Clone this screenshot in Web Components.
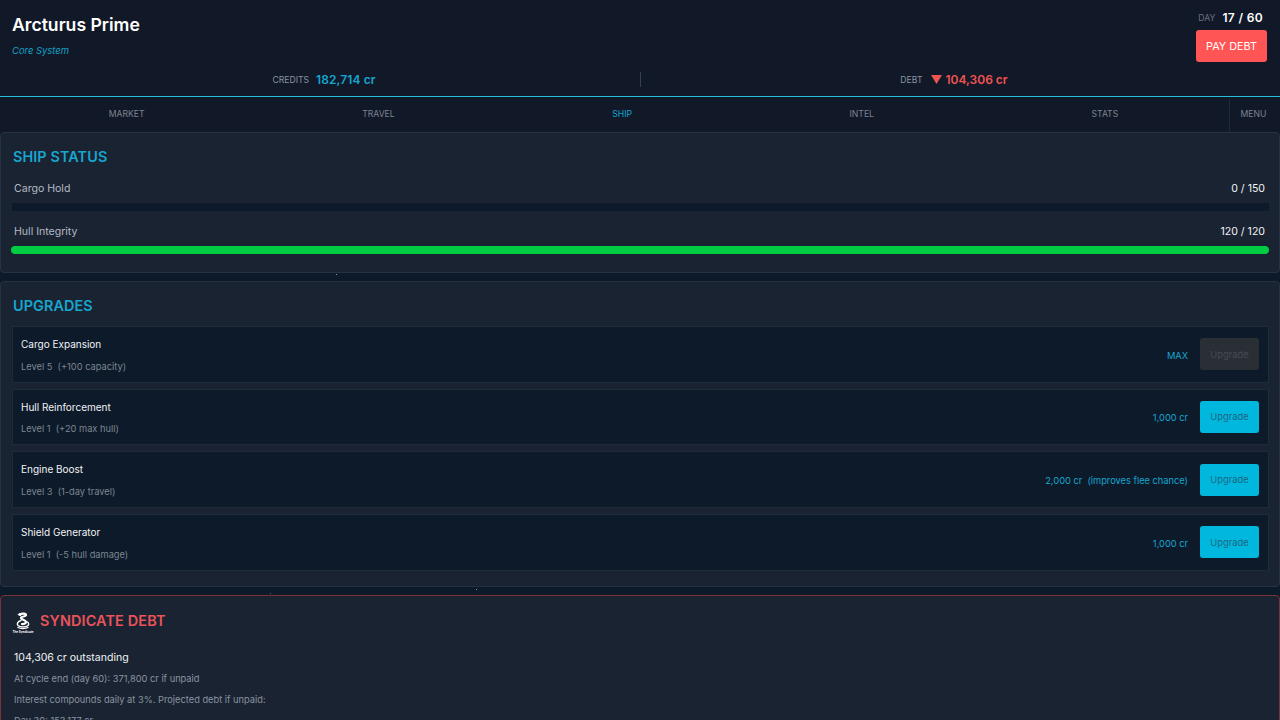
<!DOCTYPE html>
<html lang="en">
<head>
<meta charset="utf-8">
<title>Arcturus Prime</title>
<style>
html, body { margin: 0; height: 720px; overflow: hidden; background: #0d1a2a; }
body { font-family: Inter, "Liberation Sans", sans-serif; color: #fff; position: relative; }
.star { position: absolute; width: 1px; height: 1px; background: #8496a8; }
</style>
</head>
<body>
<game-header></game-header>
<game-nav></game-nav>
<span class="star" style="left:336px;top:274px"></span>
<span class="star" style="left:476px;top:589px"></span>
<span class="star" style="left:270px;top:593px;background:#46586a"></span>
<game-panel heading="SHIP STATUS" gap="15" style="height:141px">
  <stat-bar label="Cargo Hold" value="0 / 150" pct="0"></stat-bar>
  <stat-bar label="Hull Integrity" value="120 / 120" pct="100"></stat-bar>
</game-panel>
<game-panel heading="UPGRADES" gap="11" style="height:306px;margin-top:8px">
  <upgrade-row name="Cargo Expansion" info="Level 5&nbsp;&nbsp;(+100 capacity)" cost="MAX" disabled></upgrade-row>
  <upgrade-row name="Hull Reinforcement" info="Level 1&nbsp;&nbsp;(+20 max hull)" cost="1,000 cr"></upgrade-row>
  <upgrade-row name="Engine Boost" info="Level 3&nbsp;&nbsp;(1-day travel)" cost="2,000 cr&nbsp;&nbsp;(improves flee chance)"></upgrade-row>
  <upgrade-row name="Shield Generator" info="Level 1&nbsp;&nbsp;(-5 hull damage)" cost="1,000 cr"></upgrade-row>
</game-panel>
<debt-panel style="margin-top:8px"></debt-panel>

<script>
const header_template = document.createElement('template');
header_template.innerHTML = `
<style>
:host { display: block; height: 96px; background: #111827; border-bottom: 1px solid #26bddb; box-sizing: content-box; }
.top { display: flex; justify-content: space-between; height: 72px; padding: 0 13px 0 12px; }
h1 { margin: 0; padding-top: 14px; font-size: 17.6px; line-height: 22px; font-weight: 600; }
.sys { margin-top: 9px; font-size: 9.44px; line-height: 12px; font-style: italic; color: #14a3c7; }
.right { display: flex; flex-direction: column; align-items: flex-end; padding-top: 10px; }
.day { display: flex; align-items: center; gap: 7px; height: 15px; padding-right: 4px; font-size: 12px; font-weight: 600; letter-spacing: .35px; }
.day span { font-size: 8.64px; font-weight: 400; color: #6b7280; letter-spacing: 0; }
button { margin-top: 5px; width: 71px; height: 32px; padding: 0; border: 0; border-radius: 3px; background: #ff5555; color: #fff; font: 400 10.8px Inter, sans-serif; }
.stats { display: grid; grid-template-columns: 1fr 1fr; height: 24px; }
.stat { display: flex; justify-content: center; align-items: center; gap: 7px; height: 15px; font-size: 8.64px; color: #8a93a0; }
.stat.left { padding-left: 8px; }
.stat.rgt { border-left: 1px solid #374151; padding-right: 13px; }
.stat b { font-size: 12px; font-weight: 600; }
.credits { color: #17a6cf; letter-spacing: .1px; }
.debt { color: #ef5350; }
svg { display: block; margin: 0 -3px 0 1px; }
</style>
<div class="top">
  <div><h1>Arcturus Prime</h1><div class="sys">Core System</div></div>
  <div class="right">
    <div class="day"><span>DAY</span>17 / 60</div>
    <button>PAY DEBT</button>
  </div>
</div>
<div class="stats">
  <div class="stat left">CREDITS <b class="credits">182,714 cr</b></div>
  <div class="stat rgt">DEBT
    <svg width="11" height="9" viewBox="0 0 11 9"><path d="M0 0h11L5.500 9z" fill="#ef5350"/></svg>
    <b class="debt">104,306 cr</b></div>
</div>
`;
class GameHeader extends HTMLElement {
  constructor() {
    super();
    this.attachShadow({ mode: 'open' });
    this.shadowRoot.appendChild(header_template.content.cloneNode(true));
  }
}
customElements.define('game-header', GameHeader);

const nav_template = document.createElement('template');
nav_template.innerHTML = `
<style>
:host { display: flex; height: 35px; background: #111827; font-size: 8.64px; color: #7d8591; }
.tabs { flex: 1; display: flex; padding-right: 2px; }
.tabs span { flex: 1 1 auto; }
.tabs span, .menu { display: flex; align-items: center; justify-content: center; padding-bottom: 2px; }
.on { color: #17a6cf; }
.menu { width: 51px; box-sizing: border-box; padding-right: 3px; border-left: 1px solid #1f2937; margin: 2px 0 0; padding-bottom: 4px; }
</style>
<div class="tabs"><span>MARKET</span><span>TRAVEL</span><span class="on">SHIP</span><span>INTEL</span><span>STATS</span></div>
<div class="menu">MENU</div>
`;
class GameNav extends HTMLElement {
  constructor() {
    super();
    this.attachShadow({ mode: 'open' });
    this.shadowRoot.appendChild(nav_template.content.cloneNode(true));
  }
}
customElements.define('game-nav', GameNav);

const panel_template = document.createElement('template');
panel_template.innerHTML = `
<style>
:host { display: block; box-sizing: border-box; background: #1a2332; border: 1px solid #263242; border-radius: 4px; padding: 15px 10px 0 11px; }
h2 { margin: 0 0 14px 1px; font-size: 14.4px; line-height: 18px; font-weight: 600; letter-spacing: .1px; color: #17a6cf; }
</style>
<h2></h2>
<slot></slot>
`;
class GamePanel extends HTMLElement {
  constructor() {
    super();
    this.attachShadow({ mode: 'open' });
    this.shadowRoot.appendChild(panel_template.content.cloneNode(true));
    const h2 = this.shadowRoot.querySelector('h2');
    h2.textContent = this.getAttribute('heading');
    if (this.getAttribute('gap')) h2.style.marginBottom = this.getAttribute('gap') + 'px';
  }
}
customElements.define('game-panel', GamePanel);

const bar_template = document.createElement('template');
bar_template.innerHTML = `
<style>
:host { display: block; height: 43px; }
.row { display: flex; justify-content: space-between; box-sizing: border-box; padding: 1px 4px 0 2px; height: 22px; font-size: 10.56px; line-height: 14px; color: #b4bac4; }
.val { color: #f1f3f5; }
.track { height: 8px; background: #0c1a2b; border-radius: 1px; }
.fill { height: 100%; margin-left: -1px; background: #00cc44; border-radius: 4px; }
.fill.empty { width: 0; }
</style>
<div class="row"><span id="label"></span><span class="val" id="value"></span></div>
<div class="track"><div class="fill"></div></div>
`;
class StatBar extends HTMLElement {
  constructor() {
    super();
    this.attachShadow({ mode: 'open' });
    this.shadowRoot.appendChild(bar_template.content.cloneNode(true));
    this.shadowRoot.querySelector('#label').textContent = this.getAttribute('label');
    this.shadowRoot.querySelector('#value').textContent = this.getAttribute('value');
    const fill = this.shadowRoot.querySelector('.fill');
    if (this.getAttribute('pct') === '0') fill.classList.add('empty');
  }
}
customElements.define('stat-bar', StatBar);

const upgrade_template = document.createElement('template');
upgrade_template.innerHTML = `
<style>
:host { display: flex; box-sizing: border-box; height: 56.67px; margin-bottom: 6px; align-items: center; justify-content: space-between; background: #0d1a2a; border: 1px solid #1f2b3a; padding: 0 9px 0 8px; }
.txt { padding-top: 2px; }
.name { font-size: 10px; line-height: 13px; color: #f1f3f5; }
.info { margin-top: 9.5px; font-size: 9.28px; line-height: 12px; color: #7d8591; }
.right { display: flex; align-items: center; gap: 12px; }
.cost { padding-top: 2px; font-size: 9.28px; color: #17a6cf; }
button { width: 59px; height: 32px; padding: 0; border: 0; border-radius: 3px; background: #00b8de; color: #1f6580; font: 400 9.4px Inter, sans-serif; }
button[disabled] { background: #2a2f36; color: #464b52; }
</style>
<div class="txt"><div class="name"></div><div class="info"></div></div>
<div class="right"><span class="cost"></span><button>Upgrade</button></div>
`;
class UpgradeRow extends HTMLElement {
  constructor() {
    super();
    this.attachShadow({ mode: 'open' });
    this.shadowRoot.appendChild(upgrade_template.content.cloneNode(true));
    this.shadowRoot.querySelector('.name').textContent = this.getAttribute('name');
    this.shadowRoot.querySelector('.info').textContent = this.getAttribute('info');
    this.shadowRoot.querySelector('.cost').textContent = this.getAttribute('cost');
    this.shadowRoot.querySelector('button').disabled = this.hasAttribute('disabled');
  }
}
customElements.define('upgrade-row', UpgradeRow);

const debt_template = document.createElement('template');
debt_template.innerHTML = `
<style>
:host { display: block; height: 140px; box-sizing: border-box; background: #1a2332; border: 1px solid #7d2f3a; border-radius: 4px; padding: 14px 12px 0 10px; }
.head { display: flex; align-items: center; gap: 5px; height: 26px; }
h2 { margin: 0 0 6px; font-size: 14.4px; font-weight: 600; letter-spacing: .15px; color: #e9545a; }
.logo { position: relative; width: 24px; height: 26px; padding-top: 2px; box-sizing: border-box; }
.logo svg { display: block; margin: 0 auto; }
.logo span { position: absolute; left: 0; right: 0; top: 20px; text-align: center; font-size: 3px; line-height: 5px; font-weight: 700; white-space: nowrap; color: #fff; }
.big { margin: 15px 0 0 3px; font-size: 10.56px; line-height: 14px; color: #f1f3f5; }
p { margin: 0 0 0 3px; font-size: 9.28px; line-height: 21px; color: #8a93a0; }
.first { margin-top: 3px; }
</style>
<div class="head">
  <div class="logo">
    <svg width="18" height="19" viewBox="0 0 18 19" fill="none" stroke="#fff" stroke-linecap="round">
      <path d="M6 2.500c2-1.400 6-1.200 6 .6 0 1.800-4.400 1-5 2.600-.7 1.900 5 2.200 5 4.400 0 1.500-2 2-4 2" stroke-width="2.200"/>
      <path d="M6 1.500l-1.500 1.200 2 .8" stroke-width="1.200"/>
      <path d="M7 8.500C3.500 9.500 2.500 12 4 13.500c2 1.800 8 1.800 10 0 1-1 .8-2.500-.5-3.500" stroke-width="1.400"/>
      <path d="M4 15.500c2.500 1.300 7.500 1.300 10 0" stroke-width="1.300"/>
    </svg>
    <span>The Syndicate</span>
  </div>
  <h2>SYNDICATE DEBT</h2>
</div>
<div class="big">104,306 cr outstanding</div>
<p class="first">At cycle end (day 60): 371,800 cr if unpaid</p>
<p>Interest compounds daily at 3%. Projected debt if unpaid:</p>
<p>Day 30: 153,177 cr</p>
`;
class DebtPanel extends HTMLElement {
  constructor() {
    super();
    this.attachShadow({ mode: 'open' });
    this.shadowRoot.appendChild(debt_template.content.cloneNode(true));
  }
}
customElements.define('debt-panel', DebtPanel);
</script>
</body>
</html>
